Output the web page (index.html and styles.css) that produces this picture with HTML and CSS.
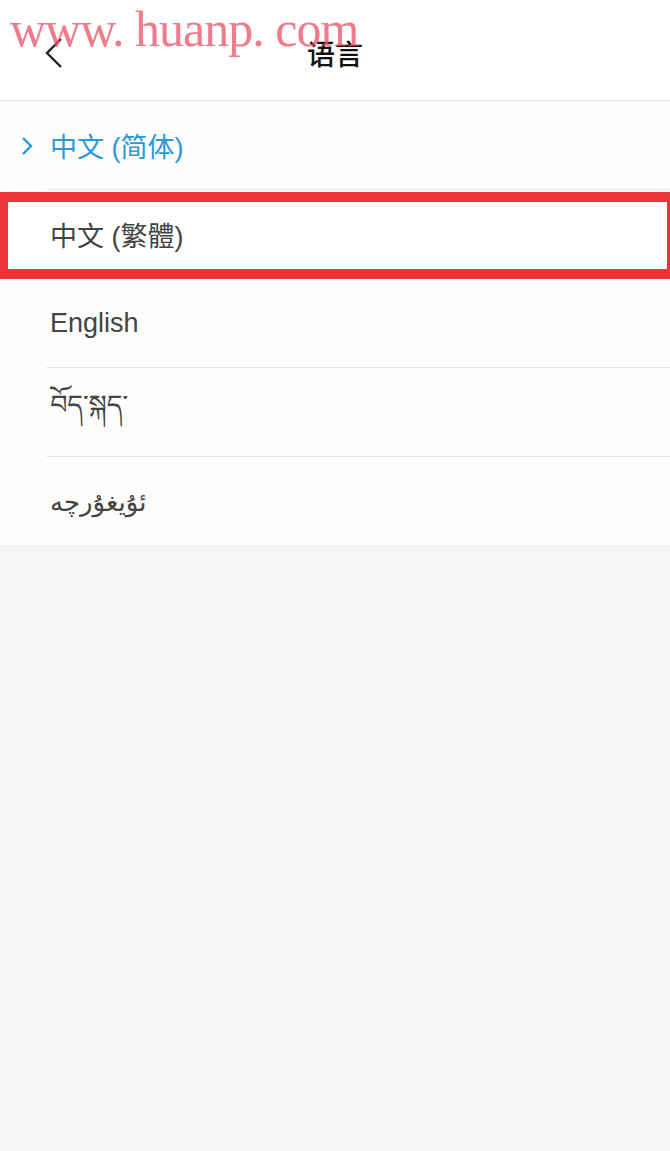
FILE: index.html
```html
<!DOCTYPE html>
<html lang="zh-CN">
<head>
  <meta charset="UTF-8">
  <title>语言</title>
  <link rel="stylesheet" href="styles.css">
</head>
<body>
  <div class="page">
    <header class="topbar">
      <span class="back">
        <svg width="20" height="32" viewBox="0 0 20 32"><path d="M17 2 L3 16 L17 30" fill="none" stroke="#222" stroke-width="2.4"/></svg>
      </span>
      <h1>语言</h1>
    </header>

    <ul class="langs">
      <li class="lang active">
        <span class="mark">
          <svg width="12" height="20" viewBox="0 0 12 20"><path d="M2 2 L10 10 L2 18" fill="none" stroke="#2a9ad8" stroke-width="2.4"/></svg>
        </span>
        <span class="name">中文 (简体)</span>
      </li>
      <li class="lang picked"><span class="name">中文 (繁體)</span></li>
      <li class="lang"><span class="name">English</span></li>
      <li class="lang"><span class="name tibetan">བོད་སྐད་</span></li>
      <li class="lang"><span class="name uyghur">ئۇيغۇرچە</span></li>
    </ul>

    <div class="watermark">www. huanp. com</div>
  </div>
</body>
</html>
```

FILE: styles.css
```css
* {
  box-sizing: border-box;
}

body {
  margin: 0;
  padding: 0;
  font-family: "Liberation Sans", "Noto Sans CJK SC", sans-serif;
  background: #f6f5f3;
  color: #444;
}

.page {
  position: relative;
  width: 670px;
  min-height: 1151px;
}

.topbar {
  height: 101px;
  background: #fff;
  border-bottom: 1px solid #e8e8e8;
  display: flex;
  align-items: center;
  justify-content: center;
  position: relative;
}

.back {
  position: absolute;
  left: 44px;
  top: 37px;
}

.topbar h1 {
  margin: 0;
  font-family: "Noto Sans CJK SC", sans-serif;
  font-size: 28px;
  font-weight: 500;
  color: #111;
  padding-top: 6px;
}

.langs {
  list-style: none;
  margin: 0;
  padding: 0;
  background: #fdfdfc;
  border-bottom: 1px solid #e8e8e8;
}

.lang {
  height: 89px;
  margin-left: 46px;
  border-bottom: 1px solid #e8e8e8;
  display: flex;
  align-items: center;
  font-size: 27px;
  position: relative;
}

.lang:last-child {
  border-bottom: none;
}

.lang .name {
  padding-left: 4px;
}

.lang.active {
  color: #2a9ad8;
}

.lang.active .mark {
  position: absolute;
  left: -25px;
  top: 35px;
}

.lang.active .mark svg {
  display: block;
}

.lang.picked {
  margin-left: 0;
  padding-left: 46px;
  background: #fff;
}

.lang.picked::after {
  content: "";
  position: absolute;
  left: 0;
  right: 0;
  top: 2px;
  bottom: -1px;
  border: solid #ee3338;
  border-width: 10px 3px 10px 8px;
}

.tibetan {
  font-family: "Noto Sans Tibetan", "Noto Serif Tibetan", "Jomolhari", sans-serif;
}

.uyghur {
  font-family: "DejaVu Sans", "Noto Sans Arabic", sans-serif;
  font-size: 26px;
}

.watermark {
  position: absolute;
  left: 10px;
  top: 0;
  font-family: "Liberation Serif", serif;
  font-size: 50px;
  letter-spacing: -1px;
  color: rgba(235, 80, 100, 0.75);
  white-space: pre;
  pointer-events: none;
}
```
